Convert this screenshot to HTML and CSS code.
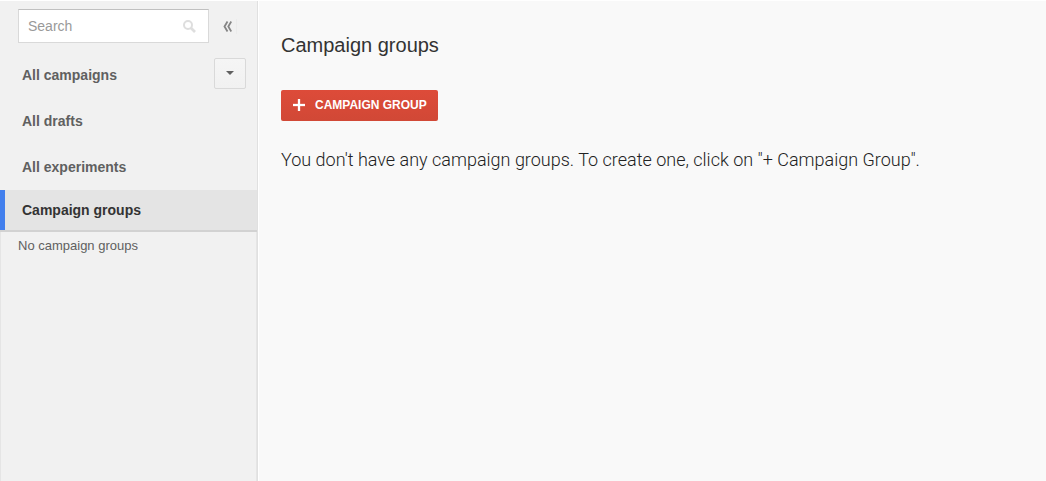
FILE: index.html
```html
<!DOCTYPE html>
<html lang="en">
<head>
  <meta charset="UTF-8">
  <meta name="viewport" content="width=device-width, initial-scale=1.0">
  <title>Campaign groups</title>
  <link rel="stylesheet" href="styles.css">
</head>
<body>
  <div class="app">
    <aside class="sidebar">
      <div class="search-row">
        <form class="search">
          <input type="text" placeholder="Search" aria-label="Search">
          <button type="submit" aria-label="Search">
            <svg width="13" height="13" viewBox="0 0 13 13" fill="none" stroke="#dedede">
              <circle cx="5" cy="5" r="4" stroke-width="2"/>
              <path d="M8 8l4 4" stroke-width="2.600"/>
            </svg>
          </button>
        </form>
        <button class="collapse" aria-label="Collapse">
          <svg width="9" height="11" viewBox="0 0 9 11" fill="none" stroke="#858585" stroke-width="1.800">
            <path d="M4.500 .5L1.500 5.500l3 5M8.300 .5L5.300 5.500l3 5"/>
          </svg>
        </button>
      </div>
      <nav class="nav">
        <div class="nav-row">
          <a href="#">All campaigns</a>
          <button class="dropdown" aria-label="Campaign options">
            <svg width="8" height="4" viewBox="0 0 8 4"><path d="M0 0h8L4 4z" fill="#606060"/></svg>
          </button>
        </div>
        <a href="#" class="nav-row">All drafts</a>
        <a href="#" class="nav-row">All experiments</a>
        <a href="#" class="nav-row active">Campaign groups</a>
      </nav>
      <div class="group-list">No campaign groups</div>
    </aside>
    <main class="content">
      <h1>Campaign groups</h1>
      <button class="create">
        <svg width="12" height="12" viewBox="0 0 12 12"><path d="M5 0h2v5h5v2H7v5H5V7H0V5h5z" fill="#fff" stroke="#fff" stroke-width=".3"/></svg>
        CAMPAIGN GROUP
      </button>
      <p class="empty">You don't have any campaign groups. To create one, click on "+ Campaign Group".</p>
    </main>
  </div>
</body>
</html>
```

FILE: styles.css
```css
* {
  box-sizing: border-box;
}
body {
  margin: 0;
  background: #fff;
  font-family: "Liberation Sans", Arial, sans-serif;
}
button, input {
  font-family: inherit;
}
button {
  padding: 0;
  border: 0;
  background: none;
  cursor: pointer;
}
svg {
  display: block;
}
.app {
  display: flex;
  min-height: 100vh;
  padding-top: 1px;
}
.sidebar {
  display: flex;
  flex-direction: column;
  flex: 0 0 258px;
  min-width: 0;
  border-right: 1px solid #e0e0e0;
  background: #f1f1f1;
}
.search-row {
  display: flex;
  align-items: center;
  padding: 8px 20px 9px 18px;
}
.search {
  display: flex;
  align-items: center;
  flex: 1;
  min-width: 0;
  height: 34px;
  padding: 0 12px 0 9px;
  border: 1px solid #d9d9d9;
  border-top-color: #c0c0c0;
  background: #fff;
}
.search input {
  flex: 1;
  min-width: 0;
  padding: 0;
  border: 0;
  outline: 0;
  background: none;
  color: #333;
  font-size: 14px;
}
.search input::placeholder {
  color: #999;
  opacity: 1;
}
.collapse {
  margin-left: 14px;
  padding: 2px 4px 2px 0;
  border-right: 1px solid #ebebeb;
}
.nav-row {
  display: flex;
  align-items: center;
  justify-content: space-between;
  height: 46px;
  padding: 0 11px 0 22px;
  color: #606060;
  font-size: 14px;
  font-weight: bold;
  text-decoration: none;
}
.nav-row a {
  color: inherit;
  text-decoration: none;
}
.dropdown {
  display: flex;
  align-items: center;
  justify-content: center;
  width: 32px;
  height: 31px;
  margin-bottom: 4px;
  border: 1px solid #d9d9d9;
  border-radius: 2px;
  background: linear-gradient(#f5f5f5, #f1f1f1);
}
.active {
  height: 42px;
  border-bottom: 2px solid #d2d2d2;
  background: #e4e4e4;
  box-shadow: inset 5px 0 #427fed;
  color: #333;
}
.group-list {
  flex: 1;
  padding: 6px 17px;
  border: solid #e5e5e5;
  border-width: 0 1px;
  color: #606060;
  font-size: 13px;
  line-height: 16px;
}
.content {
  flex: 1;
  padding: 32px 22px;
  border-left: 1px solid #fff;
  background: #f9f9f9;
}
h1 {
  margin: 0 0 33px;
  color: #333;
  font-size: 20px;
  font-weight: normal;
  line-height: 24px;
}
.create {
  display: flex;
  align-items: center;
  gap: 10px;
  height: 31px;
  padding: 0 11px 2px 12px;
  border-radius: 2px;
  background: linear-gradient(#dd4b39, #d14836);
  color: #fff;
  font-size: 12px;
  font-weight: bold;
}
.empty {
  margin: 27px 0 0;
  color: #222;
  font-family: Roboto, sans-serif;
  font-size: 18px;
  font-weight: 300;
  line-height: 24px;
}
```
